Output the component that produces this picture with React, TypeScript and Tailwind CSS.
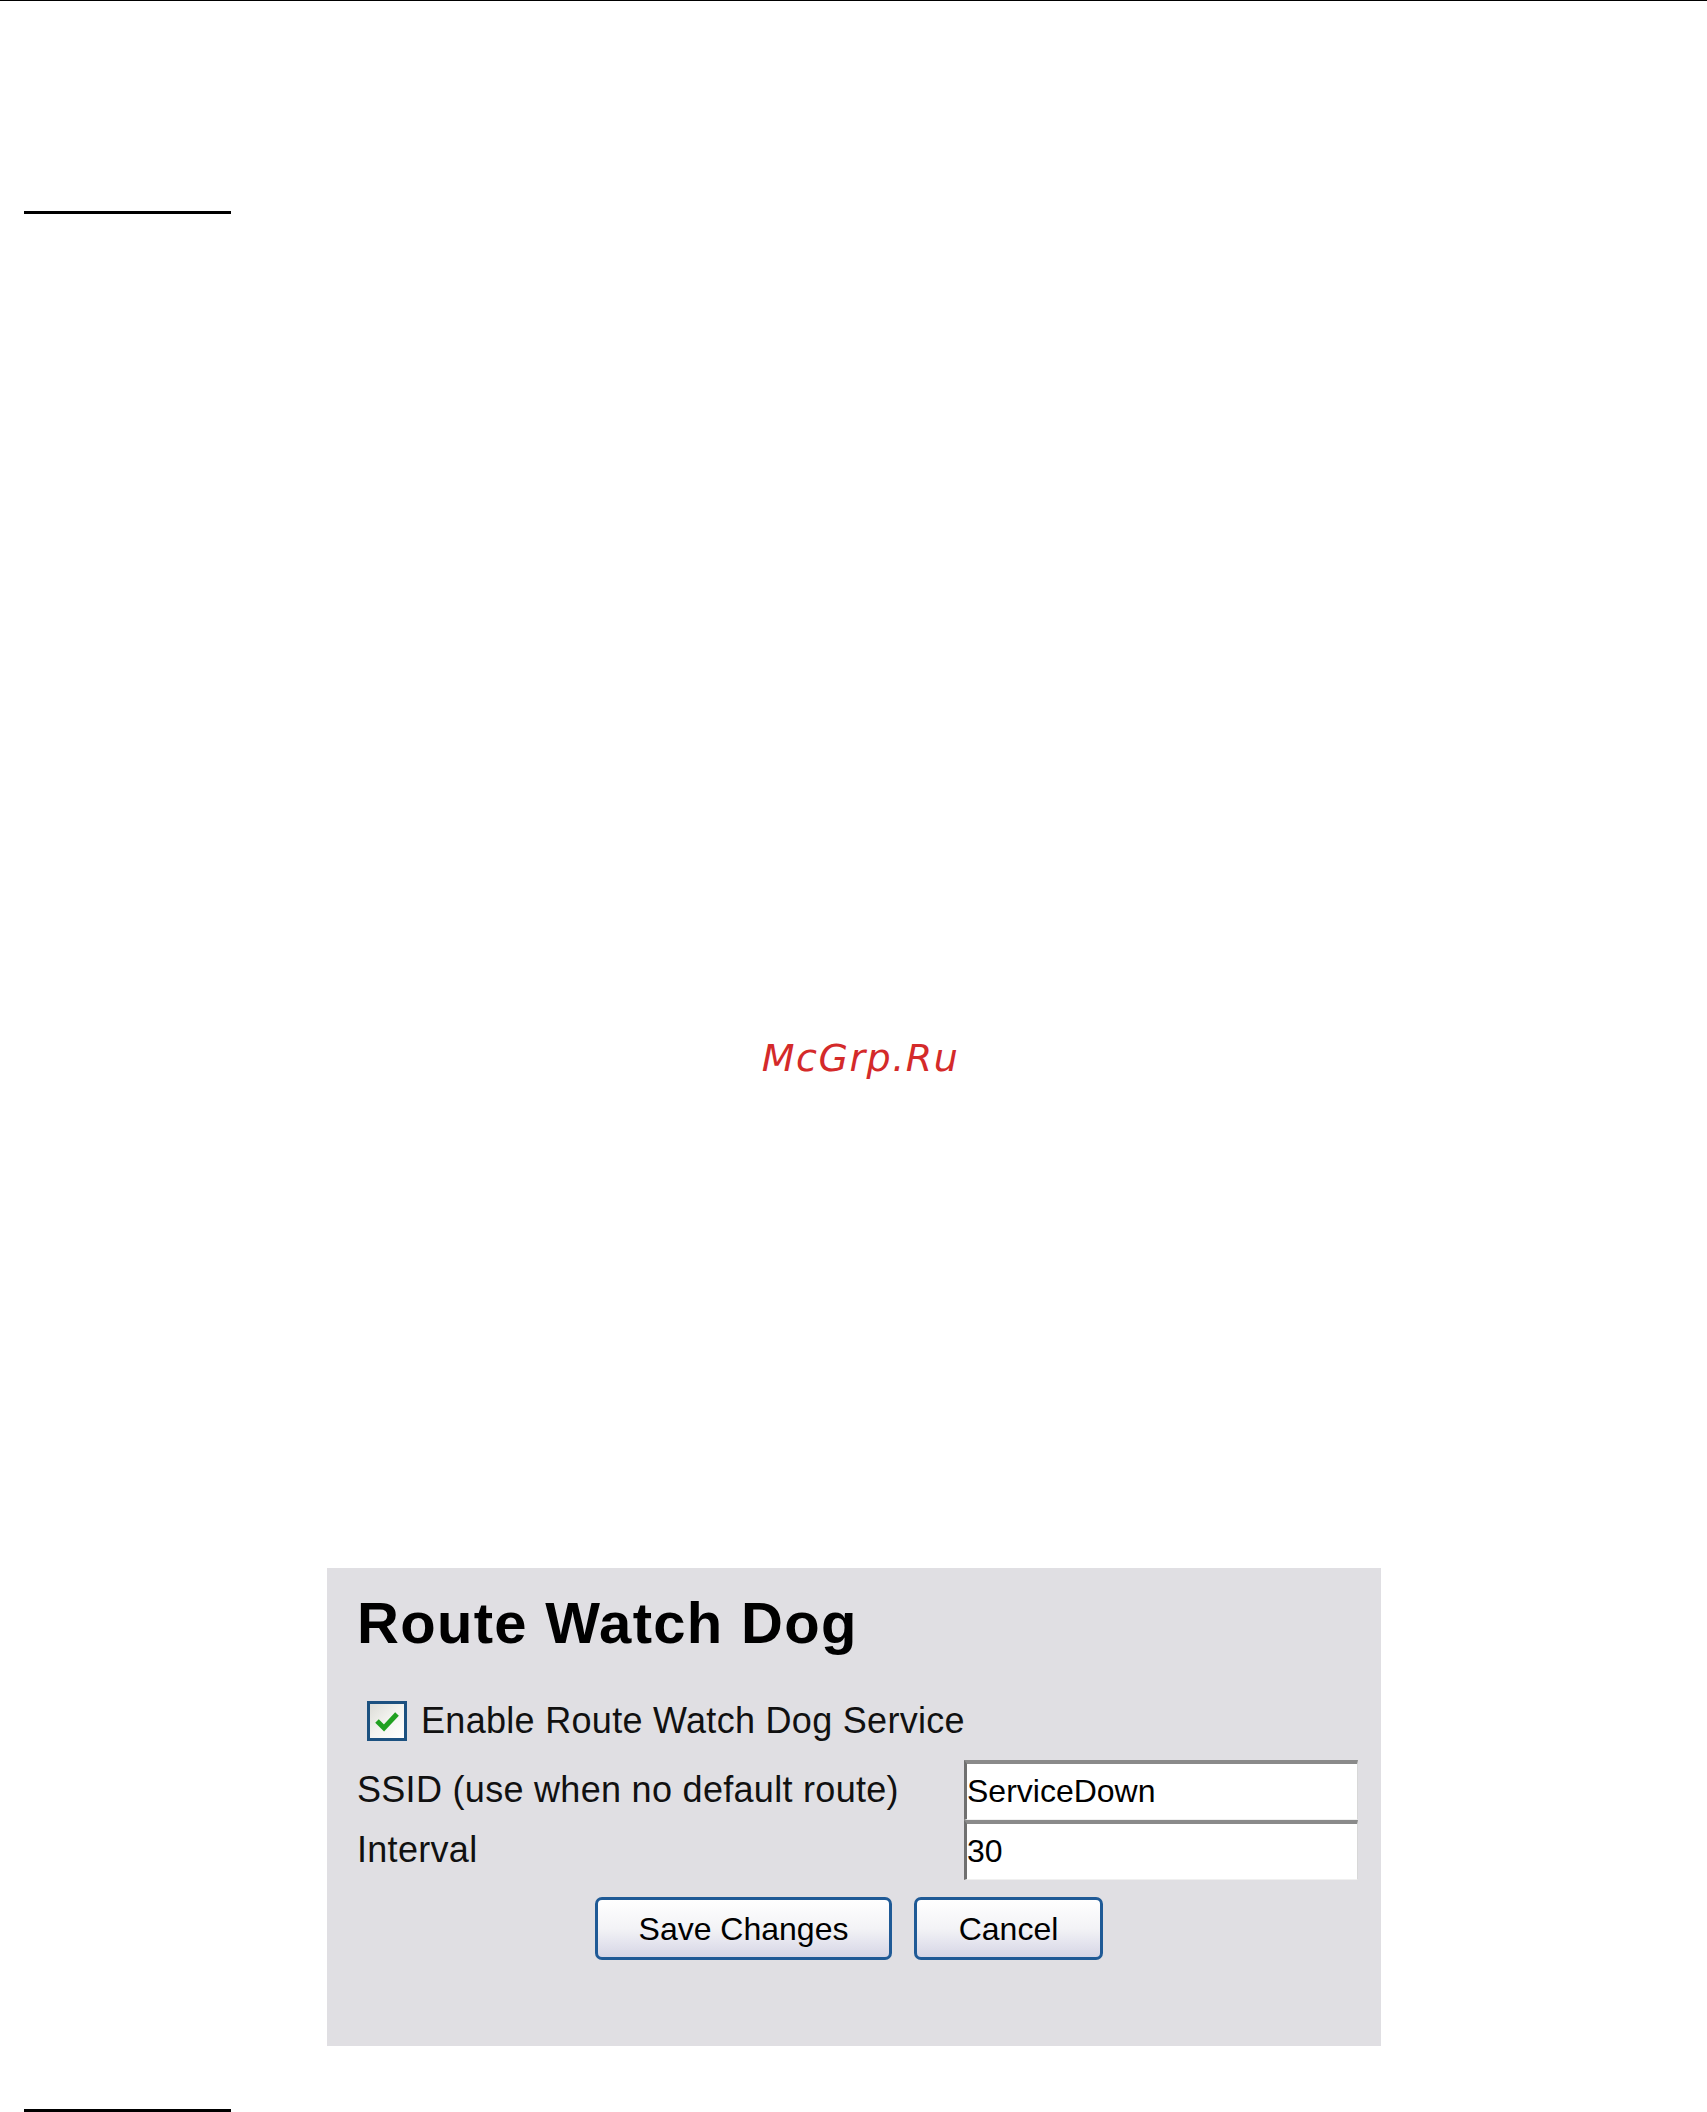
import { useState } from 'react';

function XpCheckbox({ checked, onChange }: { checked: boolean; onChange: () => void }) {
  return (
    <button
      type="button"
      onClick={onChange}
      className="w-[40px] h-[40px] shrink-0 border-[3px] border-[#1c5180] bg-gradient-to-br from-[#dcdcd7] via-[#f4f4f0] to-white flex items-center justify-center"
    >
      {checked && (
        <svg width="26" height="24" viewBox="0 0 26 24">
          <path d="M3 12 L10 19 L23 5" fill="none" stroke="#21a121" strokeWidth="5" strokeLinejoin="miter" />
        </svg>
      )}
    </button>
  );
}

function XpInput({ value, onChange }: { value: string; onChange: (v: string) => void }) {
  return (
    <input
      value={value}
      onChange={(e) => onChange(e.target.value)}
      className="w-[394px] h-[60px] bg-white border-t-[4px] border-l-[3px] border-r border-b border-t-[#8a8a8a] border-l-[#707070] border-r-[#d8d8d8] border-b-[#f0f0f0] px-0 text-[32px] leading-none text-black outline-none"
    />
  );
}

function XpButton({ label, width }: { label: string; width: string }) {
  return (
    <button
      type="button"
      className={`${width} h-[63px] rounded-[7px] border-[3px] border-[#1f5a96] bg-gradient-to-b from-white via-[#f3f3f6] to-[#d6d6e6] text-[32px] leading-none text-black`}
    >
      {label}
    </button>
  );
}

export default function App() {
  const [enabled, setEnabled] = useState(true);
  const [ssid, setSsid] = useState('ServiceDown');
  const [interval, setInterval] = useState('30');

  return (
    <div className="w-full h-[2112px] bg-white overflow-hidden font-['Liberation_Sans',Arial,sans-serif]">
      <div className="h-px bg-black" />

      <div className="mt-[210px] ml-[24px] w-[207px] h-[3px] bg-black" />

      <div className="mt-[825px] flex justify-center pl-[14px]">
        <span className="font-['DejaVu_Sans',sans-serif] italic text-[38px] leading-none tracking-[1.5px] text-[#d42a2a]">
          McGrp.Ru
        </span>
      </div>

      <div className="mt-[491px] ml-[327px] w-[1054px] h-[478px] bg-[#e0dfe3] pt-[26px] pl-[30px] pr-[23px]">
        <h1 className="text-[58px] leading-none font-bold tracking-[1.3px] text-black">Route Watch Dog</h1>

        <div className="mt-[49px] flex items-center gap-[14px] ml-[10px]">
          <XpCheckbox checked={enabled} onChange={() => setEnabled(!enabled)} />
          <span className="text-[36px] leading-none tracking-[0.3px] text-[#111]">Enable Route Watch Dog Service</span>
        </div>

        <div className="mt-[19px] grid grid-cols-[607px_394px]">
          <div className="flex items-center text-[36px] leading-none tracking-[0.3px] text-[#111]">SSID (use when no default route)</div>
          <XpInput value={ssid} onChange={setSsid} />
          <div className="flex items-center text-[36px] leading-none tracking-[0.3px] text-[#111]">Interval</div>
          <XpInput value={interval} onChange={setInterval} />
        </div>

        <div className="mt-[17px] flex justify-center gap-[22px] pr-[17px]">
          <XpButton label="Save Changes" width="w-[297px]" />
          <XpButton label="Cancel" width="w-[189px]" />
        </div>
      </div>

      <div className="mt-[63px] ml-[24px] w-[207px] h-[3px] bg-black" />
    </div>
  );
}
